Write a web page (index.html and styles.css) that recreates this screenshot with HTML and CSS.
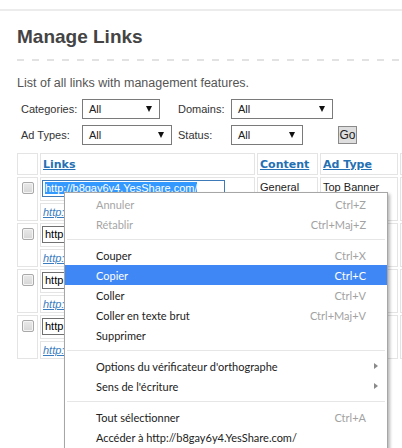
FILE: index.html
```html
<!DOCTYPE html>
<html lang="fr">
<head>
<meta charset="utf-8">
<title>Manage Links</title>
<link rel="stylesheet" href="styles.css">
</head>
<body>
<div class="topbar"></div>
<main class="page">
  <h1 class="title">Manage Links</h1>
  <div class="rule"></div>
  <p class="intro">List of all links with management features.</p>
  <div class="filters">
    <span class="flabel">Categories:</span>
    <span class="fcell"><span class="select sel-cat">All<i class="arrow"></i></span></span>
    <span class="flabel">Domains:</span>
    <span class="fcell"><span class="select sel-dom">All<i class="arrow"></i></span></span>
    <span class="fcell"></span>
    <span class="flabel">Ad Types:</span>
    <span class="fcell"><span class="select sel-type">All<i class="arrow"></i></span></span>
    <span class="flabel">Status:</span>
    <span class="fcell"><span class="select sel-status">All<i class="arrow"></i></span></span>
    <span class="fcell"><span class="go">Go</span></span>
  </div>
  <table class="links">
    <thead>
      <tr>
        <th class="c1"></th>
        <th class="c2"><a class="hlink">Links</a></th>
        <th class="c3"><a class="hlink">Content</a></th>
        <th class="c4"><a class="hlink">Ad Type</a></th>
        <th class="c5"></th>
      </tr>
    </thead>
    <tbody>
      <tr class="main">
        <td class="cbcell" rowspan="2"><span class="cb"></span></td>
        <td class="fieldcell"><span class="field focus"><span class="selected">http://b8gay6y4.YesShare.com/</span></span></td>
        <td class="txt" rowspan="2">General</td>
        <td class="txt" rowspan="2">Top Banner</td>
        <td class="txt" rowspan="2"></td>
      </tr>
      <tr class="sub">
        <td class="linkcell"><a class="ilink">http://b8gay6y4.YesShare.com/</a></td>
      </tr>
      <tr class="main">
        <td class="cbcell" rowspan="2"><span class="cb"></span></td>
        <td class="fieldcell"><span class="field">http://k2mfa9q1.YesShare.com/</span></td>
        <td class="txt" rowspan="2">General</td>
        <td class="txt" rowspan="2">Top Banner</td>
        <td class="txt" rowspan="2"></td>
      </tr>
      <tr class="sub">
        <td class="linkcell"><a class="ilink">http://k2mfa9q1.YesShare.com/</a></td>
      </tr>
      <tr class="main">
        <td class="cbcell" rowspan="2"><span class="cb"></span></td>
        <td class="fieldcell"><span class="field">http://p7ztc3w8.YesShare.com/</span></td>
        <td class="txt" rowspan="2">General</td>
        <td class="txt" rowspan="2">Top Banner</td>
        <td class="txt" rowspan="2"></td>
      </tr>
      <tr class="sub">
        <td class="linkcell"><a class="ilink">http://p7ztc3w8.YesShare.com/</a></td>
      </tr>
      <tr class="main">
        <td class="cbcell" rowspan="2"><span class="cb"></span></td>
        <td class="fieldcell"><span class="field">http://r4hxb6n2.YesShare.com/</span></td>
        <td class="txt" rowspan="2">General</td>
        <td class="txt" rowspan="2">Top Banner</td>
        <td class="txt" rowspan="2"></td>
      </tr>
      <tr class="sub">
        <td class="linkcell"><a class="ilink">http://r4hxb6n2.YesShare.com/</a></td>
      </tr>
    </tbody>
  </table>
</main>

<div class="ctx">
  <div class="item disabled"><span class="label">Annuler</span><span class="key">Ctrl+Z</span></div>
  <div class="item disabled"><span class="label">Rétablir</span><span class="key">Ctrl+Maj+Z</span></div>
  <div class="sep"></div>
  <div class="item"><span class="label">Couper</span><span class="key">Ctrl+X</span></div>
  <div class="item active"><span class="label">Copier</span><span class="key">Ctrl+C</span></div>
  <div class="item"><span class="label">Coller</span><span class="key">Ctrl+V</span></div>
  <div class="item"><span class="label">Coller en texte brut</span><span class="key">Ctrl+Maj+V</span></div>
  <div class="item"><span class="label">Supprimer</span></div>
  <div class="sep"></div>
  <div class="item"><span class="label">Options du vérificateur d'orthographe</span><i class="subarrow"></i></div>
  <div class="item"><span class="label">Sens de l'écriture</span><i class="subarrow"></i></div>
  <div class="sep"></div>
  <div class="item"><span class="label">Tout sélectionner</span><span class="key">Ctrl+A</span></div>
  <div class="item"><span class="label">Accéder à http://b8gay6y4.YesShare.com/</span></div>
</div>
</body>
</html>
```

FILE: styles.css
```css
html, body {
  margin: 0;
  padding: 0;
  height: 448px;
  overflow: hidden;
  background: #fff;
}
body {
  position: relative;
  font-family: "Liberation Sans", Arial, sans-serif;
  color: #333;
}
.topbar {
  height: 9px;
  border-bottom: 2px solid #ececec;
}
.page {
  padding-left: 17px;
}
.title {
  margin: 15px 0 0;
  font-size: 19px;
  line-height: 22px;
  font-weight: bold;
  color: #444;
}
.rule {
  margin-top: 11px;
  height: 2px;
  background: repeating-linear-gradient(90deg, #e2e2e2 0 7px, transparent 7px 15px);
}
.intro {
  margin: 15px 0 0;
  font-size: 12.5px;
  line-height: 15px;
  color: #555;
}
.filters {
  margin: 8px 0 0 4px;
  display: grid;
  grid-template-columns: 61px 96px 53px 107px auto;
  grid-auto-rows: 20px;
  row-gap: 6px;
  font-size: 11px;
  color: #333;
}
.flabel, .fcell {
  display: flex;
  align-items: center;
}
.select {
  box-sizing: border-box;
  height: 20px;
  display: flex;
  align-items: center;
  justify-content: space-between;
  padding: 0 7px 0 6px;
  border: 1px solid #7a7a7a;
  background: #fff;
  color: #222;
  font-size: 11px;
}
.sel-cat { width: 78px; }
.sel-dom { width: 102px; }
.sel-type { width: 90px; }
.sel-status { width: 72px; }
.arrow {
  width: 0;
  height: 0;
  border-left: 3px solid transparent;
  border-right: 3px solid transparent;
  border-top: 6px solid #111;
}
.go {
  box-sizing: border-box;
  width: 19px;
  height: 18px;
  display: flex;
  align-items: center;
  justify-content: center;
  background: #dedede;
  border: 1px solid #8a8a8a;
  color: #222;
  font-size: 12px;
}
.links {
  margin: 6px 0 0 -2px;
  table-layout: fixed;
  width: 467px;
  border-collapse: separate;
  border-spacing: 2px;
  font-size: 11px;
  color: #222;
}
.links th, .links td {
  box-sizing: border-box;
  border: 1px solid #e4e4e4;
  padding: 0 2px;
  text-align: left;
}
.links th {
  height: 22px;
  vertical-align: middle;
}
.c1 { width: 21px; }
.c2 { width: 215px; }
.c3 { width: 61px; }
.c4 { width: 78px; }
.c5 { width: 80px; }
.hlink {
  font-family: "DejaVu Sans", Verdana, sans-serif;
  font-size: 11px;
  font-weight: bold;
  color: #2470b3;
  text-decoration: underline;
}
.cbcell {
  vertical-align: top;
  text-align: center;
  padding-top: 4px !important;
}
.cb {
  display: block;
  margin: 0 auto;
  box-sizing: border-box;
  width: 12px;
  height: 12px;
  border: 1px solid #a9a9a9;
  border-radius: 2px;
  background: linear-gradient(#e9e9e9, #d6d6d6);
  box-shadow: inset 0 0 0 1px #f4f4f4;
}
.fieldcell {
  height: 24px;
  vertical-align: top;
  padding: 2px 1px 3px !important;
  overflow: hidden;
}
.field {
  display: block;
  box-sizing: border-box;
  width: 183px;
  height: 17px;
  border: 1px solid #707070;
  padding: 0 2px;
  font-size: 11px;
  line-height: 15px;
  color: #000;
  white-space: nowrap;
  overflow: hidden;
  background: #fff;
}
.field.focus {
  border-color: #3f7ab8;
}
.selected {
  background: #3399ff;
  color: #fff;
}
.linkcell {
  height: 18px;
  vertical-align: middle;
  white-space: nowrap;
  overflow: hidden;
}
.ilink {
  font-style: italic;
  color: #3a7cbf;
  text-decoration: underline;
}
.txt {
  vertical-align: top;
  padding-top: 3px !important;
  line-height: 13px;
  white-space: nowrap;
  overflow: hidden;
}

/* context menu overlay */
.ctx {
  position: absolute;
  left: 64px;
  top: 192px;
  width: 324px;
  box-sizing: border-box;
  padding: 1px 0 8px;
  background: #fff;
  border: 1px solid #a6a6a6;
  box-shadow: 2px 2px 3px rgba(0, 0, 0, 0.28);
  font-family: Lato, "Noto Sans", sans-serif;
  font-size: 11px;
  color: #222;
}
.item {
  height: 20px;
  display: flex;
  align-items: center;
  padding: 0 21px 0 31px;
}
.label {
  flex: 1;
  white-space: nowrap;
}
.key {
  color: #a2a2a2;
}
.disabled .label {
  color: #a6a6a6;
}
.active {
  background: #3f87f5;
  color: #fff;
}
.active .key {
  color: #fff;
}
.subarrow {
  width: 0;
  height: 0;
  margin-right: -12px;
  border-top: 3px solid transparent;
  border-bottom: 3px solid transparent;
  border-left: 4px solid #8a8a8a;
}
.sep {
  height: 11px;
  display: flex;
  align-items: center;
  padding: 0 2px;
}
.sep::before {
  content: "";
  flex: 1;
  height: 1px;
  background: #e6e6e6;
}
```
